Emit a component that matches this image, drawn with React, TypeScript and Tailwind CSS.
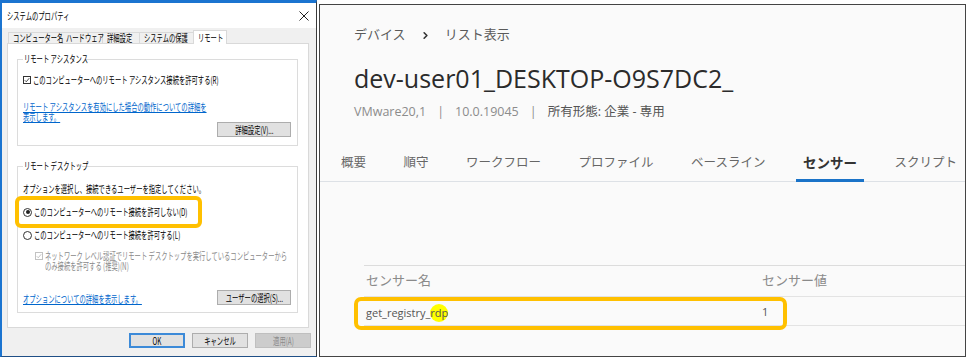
import React from 'react';
import { ChevronRight } from 'lucide-react';

// Left-aligned runs take no layout width so the unscaled size can't push things around.
function W({ children, className = '', center }: { children: React.ReactNode; className?: string; center?: boolean }) {
  return (
    <span
      className={
        (center ? 'origin-center ' : 'w-0 origin-left ') +
        'inline-block shrink-0 scale-x-[0.63] whitespace-nowrap ' +
        className
      }
    >
      {children}
    </span>
  );
}

function CheckBox({ disabled }: { disabled?: boolean }) {
  return (
    <span
      className={
        disabled
          ? 'flex h-[8px] w-[8px] shrink-0 items-center justify-center border border-[#c2c2c2] bg-white'
          : 'flex h-[8px] w-[8px] shrink-0 items-center justify-center border border-[#333333] bg-white'
      }
    >
      <svg viewBox="0 0 8 8" className="h-[6px] w-[6px]">
        <path d="M1 4.3 L3 6.3 L7 1.6" fill="none" stroke={disabled ? '#b5b5b5' : '#222'} strokeWidth="1.1" />
      </svg>
    </span>
  );
}

function Radio({ on }: { on?: boolean }) {
  return (
    <span className="flex h-[9px] w-[9px] shrink-0 items-center justify-center rounded-full border border-[#333333] bg-white">
      {on && <span className="h-[4px] w-[4px] rounded-full bg-[#222]" />}
    </span>
  );
}

const dialogTabs = [
  { label: 'コンピューター名', cls: 'w-[54px]' },
  { label: 'ハードウェア', cls: 'w-[42px]' },
  { label: '詳細設定', cls: 'w-[38px]' },
  { label: 'システムの保護', cls: 'w-[55px]' },
];

function Dialog() {
  return (
    <div className="flex h-[357px] w-[317px] shrink-0 flex-col border-b border-l-2 border-r border-t-[3px] border-b-[#1f4f86] border-l-[#1b74d0] border-r-[#3a3a3a] border-t-[#1b74d0] bg-[#f0f0f0] font-['Noto_Sans_CJK_JP',sans-serif] text-[10px] leading-[12px] text-black">
      <div className="flex h-[25px] shrink-0 items-center justify-between bg-white pl-[5px] pr-[7px]">
        <W>システムのプロパティ</W>
        <svg viewBox="0 0 10 10" className="h-[10px] w-[10px]">
          <path d="M0.5 0.5 L9.5 9.5 M9.5 0.5 L0.5 9.5" stroke="#222" strokeWidth="1" />
        </svg>
      </div>

      <div className="ml-[6px] mt-[2px] flex h-[13px] items-end">
        {dialogTabs.map((t) => (
          <div key={t.label} className={t.cls + ' -mr-px flex h-[11px] items-center border border-b-0 border-[#d9d9d9] bg-[#f0f0f0] pl-[4px]'}>
            <W>{t.label}</W>
          </div>
        ))}
        <div className="relative z-10 -mb-px flex h-[14px] w-[34px] items-center border border-b-0 border-[#d9d9d9] bg-white pl-[4px]">
          <W>リモート</W>
        </div>
      </div>

      <div className="ml-[5px] h-[285px] w-[302px] border border-[#d9d9d9] bg-white">
        <fieldset className="ml-[9px] mt-[9px] w-[281px] border border-[#dcdcdc] pb-[8px] pl-[5px]">
          <legend className="w-[62px] px-[1px]">
            <W>リモート アシスタンス</W>
          </legend>
          <div className="mt-[9px] flex h-[12px] items-center gap-[2px]">
            <CheckBox />
            <W>このコンピューターへのリモート アシスタンス接続を許可する(R)</W>
          </div>
          <div className="mt-[16px] leading-[10px] text-[#0066cc]">
            <W className="underline">リモート アシスタンスを有効にした場合の動作についての詳細を</W>
            <br />
            <W className="underline">表示します。</W>
          </div>
          <div className="flex justify-end pr-[6px]">
            <div className="flex h-[15px] w-[74px] items-center justify-center border border-[#adadad] bg-[#e1e1e1]">
              <W center>詳細設定(V)...</W>
            </div>
          </div>
        </fieldset>

        <fieldset className="ml-[9px] mt-[14px] w-[281px] border border-[#dcdcdc] pb-[7px] pl-[5px]">
          <legend className="w-[59px] px-[1px]">
            <W>リモート デスクトップ</W>
          </legend>
          <div className="mt-[11px] h-[12px]">
            <W>オプションを選択し、接続できるユーザーを指定してください。</W>
          </div>
          <div className="relative mt-[11px] flex h-[12px] items-center gap-[2px]">
            <Radio on />
            <W>このコンピューターへのリモート接続を許可しない(D)</W>
            <div className="pointer-events-none absolute -bottom-[10px] -left-[8px] -top-[10px] w-[187px] rounded-[6px] border-4 border-[#ffc000]" />
          </div>
          <div className="mt-[11px] flex h-[12px] items-center gap-[2px]">
            <Radio />
            <W>このコンピューターへのリモート接続を許可する(L)</W>
          </div>
          <div className="ml-[12px] mt-[10px] flex items-start gap-[2px] leading-[10px] text-[#8a8a8a]">
            <span className="mt-[1px]">
              <CheckBox disabled />
            </span>
            <div>
              <W>ネットワーク レベル認証でリモート デスクトップを実行しているコンピューターから</W>
              <br />
              <W>のみ接続を許可する (推奨)(N)</W>
            </div>
          </div>
          <div className="mt-[19px] flex h-[15px] items-end justify-between pr-[6px]">
            <W className="text-[#0066cc] underline">オプションについての詳細を表示します。</W>
            <div className="flex h-[15px] w-[74px] shrink-0 items-center justify-center border border-[#adadad] bg-[#e1e1e1]">
              <W center>ユーザーの選択(S)...</W>
            </div>
          </div>
        </fieldset>
      </div>

      <div className="mr-[5px] mt-[5px] flex justify-end gap-[7px]">
        <div className="flex h-[15px] w-[56px] items-center justify-center border-2 border-[#3c8ad8] bg-[#e1e1e1]">
          <W center>OK</W>
        </div>
        <div className="flex h-[15px] w-[56px] items-center justify-center border border-[#adadad] bg-[#e1e1e1]">
          <W center>キャンセル</W>
        </div>
        <div className="flex h-[15px] w-[56px] items-center justify-center border border-[#bfbfbf] bg-[#cccccc] text-[#8a8a8a]">
          <W center>適用(A)</W>
        </div>
      </div>
    </div>
  );
}

const deviceTabs = ['概要', '順守', 'ワークフロー', 'プロファイル', 'ベースライン', 'センサー', 'スクリプト'];

function Device() {
  return (
    <div className="ml-[2px] mt-[4px] flex h-[353px] w-[647px] shrink-0 flex-col overflow-hidden border border-[#444444] bg-[#fafafa] font-['Open_Sans','Noto_Sans_CJK_JP',sans-serif]">
      <div className="pl-[34px]">
        <div className="mt-[21px] flex h-[18px] items-center text-[13px] text-[#5a5a5a]">
          <span>デバイス</span>
          <ChevronRight className="mx-[14px] h-[11px] w-[11px] text-[#333]" strokeWidth={3.5} />
          <span>リスト表示</span>
        </div>
        <h1 className="mt-[19px] text-[25px] leading-[30px] text-[#2b2b2b]">dev-user01_DESKTOP-O9S7DC2_</h1>
        <div className="mt-[11px] flex h-[16px] items-center text-[12.5px] text-[#8c8c8c]">
          <span>VMware20,1</span>
          <span className="mx-[11px]">|</span>
          <span>10.0.19045</span>
          <span className="mx-[11px]">|</span>
          <span className="text-[#555]">所有形態: 企業 - 専用</span>
        </div>
      </div>

      <div className="mt-[34px] flex gap-[23.5px] whitespace-nowrap border-b border-[#dde1e6] pl-[14px]">
        {deviceTabs.map((t) => (
          <div
            key={t}
            className={
              t === 'センサー'
                ? '-mb-px shrink-0 border-b-[3px] border-[#1a73c8] px-[7px] pb-[7px] text-[13.5px] font-bold leading-[18px] text-[#333]'
                : '-mb-px shrink-0 border-b-[3px] border-transparent px-[7px] pb-[7px] text-[12.5px] leading-[18px] text-[#666]'
            }
          >
            {t}
          </div>
        ))}
      </div>

      <div className="mt-[83px] pl-[44px]">
        <div className="border-t border-[#dcdcdc]">
          <div className="flex h-[31px] items-center border-b border-[#e3e3e3] text-[13px] text-[#8a8a8a]">
            <div className="w-[396px] pl-[2px]">センサー名</div>
            <div className="pl-[2px]">センサー値</div>
          </div>
          <div className="relative flex h-[29px] items-center border-b border-[#e3e3e3] pt-[3px] text-[11px] text-[#555]">
            <div className="w-[396px] pl-[2px]">
              get_registry_<span className="inline-block h-[18px] rounded-full bg-[#ffff00] leading-[18px]">rdp</span>
            </div>
            <div className="pl-[2px]">1</div>
            <div className="pointer-events-none absolute -bottom-[5px] -left-[10px] top-0 w-[433px] rounded-[7px] border-4 border-[#ffc000]" />
          </div>
        </div>
      </div>
    </div>
  );
}

export default function App() {
  return (
    <div className="flex h-[361px] w-[976px] items-start bg-white">
      <Dialog />
      <Device />
    </div>
  );
}
